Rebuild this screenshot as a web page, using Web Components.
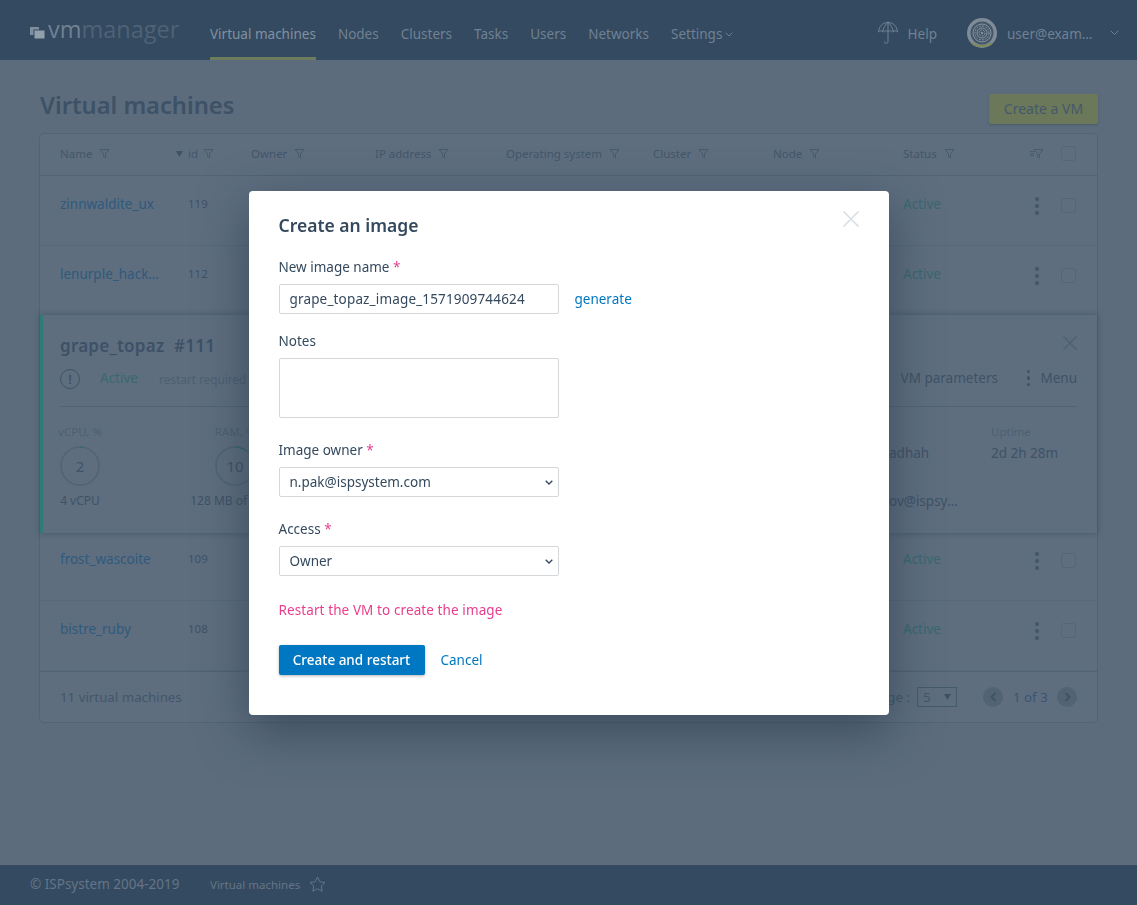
<!DOCTYPE html>
<html lang="en">
<head>
<meta charset="utf-8">
<title>Virtual machines</title>
<style>
  html, body { margin: 0; height: 100%; }
  body {
    background: #5c6c7c;
    font-family: "Noto Sans", "Open Sans", sans-serif;
    font-size: 13.5px;
    color: #3f5267;
  }
</style>
</head>
<body>
<vm-app>
  <vm-header slot="header"></vm-header>
  <vm-title-bar slot="main"></vm-title-bar>
  <vm-table slot="main">
    <vm-row name="zinnwaldite_ux" vmid="119"></vm-row>
    <vm-row name="lenurple_hack…" vmid="112"></vm-row>
    <vm-card></vm-card>
    <vm-row name="frost_wascoite" vmid="109"></vm-row>
    <vm-row name="bistre_ruby" vmid="108"></vm-row>
  </vm-table>
  <vm-footer slot="footer"></vm-footer>
</vm-app>
<vm-dialog>
  <form-field label="New image name" required>
    <div class="inline">
      <text-box value="grape_topaz_image_1571909744624"></text-box>
      <a class="link">generate</a>
    </div>
  </form-field>
  <form-field label="Notes"><text-box multiline></text-box></form-field>
  <form-field label="Image owner" required><select-box value="n.pak@ispsystem.com"></select-box></form-field>
  <form-field label="Access" required><select-box value="Owner"></select-box></form-field>
</vm-dialog>

<script>
const funnel = `<svg class="fn" width="11" height="11" viewBox="0 0 11 11" fill="none" stroke="#475a6e" stroke-width="1"><path d="M1 1.500h9L6.500 5.600v4.200L4.500 8.600v-3z"/></svg>`;

function define(name, html, init) {
  const tpl = document.createElement('template');
  tpl.innerHTML = html;
  customElements.define(name, class extends HTMLElement {
    constructor() {
      super();
      this.attachShadow({ mode: 'open' }).appendChild(tpl.content.cloneNode(true));
    }
    connectedCallback() {
      if (init) init(this, this.shadowRoot);
    }
  });
}

define('vm-app', `
  <style>
    :host { display: flex; flex-direction: column; min-height: 905px; }
    main { flex: 1; padding: 0 39px; }
  </style>
  <slot name="header"></slot>
  <main><slot name="main"></slot></main>
  <slot name="footer"></slot>
`);

define('vm-header', `
  <style>
    :host { display: flex; height: 60px; background: #344a60; color: #708193; align-items: stretch; }
    .logo { display: flex; align-items: center; width: 210px; padding-left: 30px; box-sizing: border-box; }
    .logo svg { margin-top: 6px; }
    .logo span { font-size: 23.500px; line-height: 30px; font-family: "Open Sans", sans-serif; margin: -3px 0 0 3px; color: #4f6276; }
    .logo b { font-weight: 400; color: #708193; }
    nav { display: flex; gap: 22px; }
    nav a { display: flex; align-items: center; gap: 3px; box-sizing: border-box; height: 60px; padding-top: 8px; }
    nav a.on { border-bottom: 3px solid #6c7c5c; padding-top: 11px; color: #8091a1; }
    .right { margin-left: auto; display: flex; align-items: center; padding-top: 6px; }
    .help { display: flex; align-items: center; gap: 10px; margin-right: 30px; }
    .help span { margin-top: 2px; }
    .user { margin: 2px 0 0 10px; width: 92px; white-space: nowrap; }
    .chev { margin: 0 18px 0 11px; }
  </style>
  <div class="logo">
    <svg width="15" height="13" viewBox="0 0 15 13"><rect x="0" y="0" width="9" height="8" fill="#7e8e9c"/><rect x="4" y="3" width="11" height="9" fill="#92a0ac" stroke="#344a60"/></svg>
    <span><b>vm</b>manager</span>
  </div>
  <nav>
    <a class="on">Virtual machines</a><a>Nodes</a><a>Clusters</a><a>Tasks</a><a>Users</a><a>Networks</a>
    <a>Settings <svg width="8" height="5" viewBox="0 0 8 5" fill="none" stroke="#708193"><path d="M.7.7 4 4l3.300-3.300"/></svg></a>
  </nav>
  <div class="right">
    <div class="help">
      <svg width="20" height="24" viewBox="0 0 20 24" fill="none" stroke="#708193" stroke-width="1"><path d="M.5 11C1 5 5 1.500 10 1.500S19 5 19.500 11c-1.500-1.600-3.200-1.600-4.800 0-1.500-1.600-3.200-1.600-4.700 0-1.500-1.600-3.200-1.600-4.700 0C3.700 9.400 2 9.400.5 11zM10 1.500c-3 2-4.800 5.500-5.300 9.500M10 1.500c3 2 4.800 5.500 5.300 9.500M10 .5V11M10 11v9.500a1.800 1.800 0 0 1-3.600 0"/></svg>
      <span>Help</span>
    </div>
    <svg width="30" height="30" viewBox="0 0 30 30">
      <circle cx="15" cy="15" r="15" fill="#7f8c98"/>
      <circle cx="15" cy="15" r="11.500" fill="#43566a"/>
      <circle cx="15" cy="15" r="9" fill="none" stroke="#8794a0"/>
      <circle cx="15" cy="15" r="7" fill="none" stroke="#8794a0" stroke-dasharray="2 1"/>
      <circle cx="15" cy="15" r="5" fill="none" stroke="#8794a0"/>
      <circle cx="15" cy="15" r="3" fill="none" stroke="#8794a0" stroke-dasharray="2 1"/>
      <circle cx="15" cy="15" r="1.200" fill="#8794a0"/>
      <path d="M5 25c5 4 15 4 20 0" fill="none" stroke="#7d8a5c" stroke-width="2"/>
    </svg>
    <span class="user">user@exam…</span>
    <svg class="chev" width="9" height="6" viewBox="0 0 9 6" fill="none" stroke="#708193"><path d="M.7.7 4.500 4.500 8.300.7"/></svg>
  </div>
`);

define('vm-title-bar', `
  <style>
    :host { display: flex; justify-content: space-between; align-items: center; height: 30px; margin: 34px 0 9px; }
    h1 { margin: -9px 0 0 1px; font-size: 23.700px; font-weight: 600; line-height: 30px; color: #3d5167; }
    button { width: 109px; height: 30px; padding: 0 0 2px; border: 0; border-radius: 2px; background: #6b7859; color: #44586d; font: inherit; font-size: 14px; box-shadow: 0 1px 2px rgba(40,55,70,.35); }
  </style>
  <h1>Virtual machines</h1>
  <button>Create a VM</button>
`);

define('vm-table', `
  <style>
    :host { display: block; height: 590px; box-sizing: border-box; border: 1px solid #526374; border-radius: 5px; background: #5e6e7f; }
    .head, .foot { display: grid; align-items: center; padding-left: 20px; font-size: 11.500px; color: #43566b; }
    .head { grid-template-columns: 116px 75px 124px 131px 147px 120px 130px 127px 31px 14px; box-sizing: border-box; height: 42px; padding-bottom: 2px; border-bottom: 1px solid #526374; }
    .head span { display: flex; align-items: center; gap: 7px; }
    .id { gap: 5px !important; }
    .box { width: 13px; height: 13px; border: 1px solid #566676; border-radius: 3px; }
    .foot { display: flex; box-sizing: border-box; height: 52px; padding: 0 20px 2px 20px; border-top: 1px solid #526374; font-size: 13.300px; }
    .pager { margin-left: auto; display: flex; align-items: center; }
    .size { box-sizing: border-box; width: 40px; height: 20px; margin: 0 26px 0 7px; padding: 0 5px; border: 1px solid #445a6e; display: flex; align-items: center; justify-content: space-between; }
    .nav { width: 20px; height: 20px; border-radius: 50%; background: #526374; display: flex; align-items: center; justify-content: center; }
    .of { margin: 0 10px; width: 34px; white-space: nowrap; color: #3a5470; }
  </style>
  <div class="head">
    <span>Name ${funnel}</span>
    <span class="id"><svg width="7" height="6" viewBox="0 0 7 6"><path d="M0 0h7L3.500 6z" fill="#3f5267"/></svg>id ${funnel}</span>
    <span>Owner ${funnel}</span>
    <span>IP address ${funnel}</span>
    <span>Operating system ${funnel}</span>
    <span>Cluster ${funnel}</span>
    <span>Node ${funnel}</span>
    <span>Status ${funnel}</span>
    <span><svg width="14" height="11" viewBox="0 0 14 11" fill="none" stroke="#475a6e"><path d="M0 3.500h4M0 5.500h4M0 7.500h4M4 1.500h9L9.500 5.600v4.200L7.500 8.600v-3z"/></svg></span>
    <div class="box"></div>
  </div>
  <slot></slot>
  <div class="foot">
    <span>11 virtual machines</span>
    <div class="pager">
      <span>Items per page :</span>
      <div class="size"><span>5</span><svg width="7" height="6" viewBox="0 0 7 6"><path d="M0 0h7L3.500 6z" fill="#3f5267"/></svg></div>
      <div class="nav"><svg width="7" height="10" viewBox="0 0 7 10" fill="none" stroke="#3f5267" stroke-width="2"><path d="M5.500 1 1.500 5l4 4"/></svg></div>
      <span class="of">1 of 3</span>
      <div class="nav"><svg width="7" height="10" viewBox="0 0 7 10" fill="none" stroke="#3f5267" stroke-width="2"><path d="M1.500 1l4 4-4 4"/></svg></div>
    </div>
  </div>
`);

define('vm-row', `
  <style>
    :host { display: grid; grid-template-columns: 128px 842px 31px 14px; align-items: start; height: 70px; box-sizing: border-box; padding: 18px 0 0 20px; border-bottom: 1px solid #576879; }
    .name { color: #2f5a7c; line-height: 20px; font-size: 13.500px; white-space: nowrap; }
    .mid { display: flex; line-height: 20px; }
    .id { color: #3f5266; font-size: 11.500px; }
    .st { color: #38696f; margin-left: auto; width: 127px; font-size: 13.500px; }
    .dots { display: flex; flex-direction: column; gap: 3.500px; margin: 3px 0 0 5px; }
    .dots i { width: 3.500px; height: 3.500px; border-radius: 50%; background: #455768; }
    .box { width: 13px; height: 13px; border: 1px solid #566676; border-radius: 3px; margin-top: 4px; }
  </style>
  <div class="name"></div>
  <div class="mid"><span class="id"></span><span class="st">Active</span></div>
  <div class="dots"><i></i><i></i><i></i></div>
  <div class="box"></div>
`, (el, root) => {
  root.querySelector('.name').textContent = el.getAttribute('name');
  root.querySelector('.id').textContent = el.getAttribute('vmid');
});

define('vm-metric', `
  <style>
    :host { display: flex; flex-direction: column; align-items: center; width: 40px; white-space: nowrap; }
    .lb { font-size: 11.500px; color: #4d6073; line-height: 16px; }
    .dial { position: relative; width: 40px; height: 40px; margin: 6px 0 6px; }
    .dial span { position: absolute; inset: 0; display: flex; align-items: center; justify-content: center; font-size: 15px; color: #3f5267; }
    .sub { font-size: 12px; color: #3f5267; line-height: 18px; }
  </style>
  <div class="lb"></div>
  <div class="dial">
    <svg width="40" height="40" viewBox="0 0 40 40" fill="none" stroke-width="1.500"><circle cx="20" cy="20" r="19" stroke="#526374"/><path class="arc" stroke="#38696f"/></svg>
    <span class="v"></span>
  </div>
  <div class="sub"></div>
`, (el, root) => {
  root.querySelector('.lb').textContent = el.getAttribute('label');
  root.querySelector('.v').textContent = el.getAttribute('value');
  root.querySelector('.sub').textContent = el.getAttribute('sub');
  const a = el.getAttribute('value') * 3.6 * Math.PI / 180;
  root.querySelector('.arc').setAttribute('d', `M20 1A19 19 0 0 1 ${20 + 19 * Math.sin(a)} ${20 - 19 * Math.cos(a)}`);
});

define('vm-card', `
  <style>
    :host { display: block; height: 218px; box-sizing: border-box; margin: -1px 0 -2px; padding: 19px 20px 0 17px; border-left: 3px solid #2f7a7a; position: relative; background: #5e6e7f; box-shadow: 0 0 6px rgba(40,55,70,.45); }
    .t { font-size: 17px; font-weight: 600; line-height: 24px; color: #3d5167; word-spacing: 5px; letter-spacing: .25px; }
    .close { position: absolute; top: 21px; right: 20px; }
    .st { display: flex; align-items: center; height: 30px; margin-top: 6px; }
    .alert { box-sizing: border-box; width: 20px; height: 20px; border: 1.500px solid #3f5267; border-radius: 50%; display: flex; align-items: center; justify-content: center; font-size: 13px; font-weight: 600; line-height: 1; margin-right: 20px; }
    .active { color: #38696f; margin: -2px 21px 0 0; }
    .req { font-size: 11.800px; color: #4d6073; margin-top: -1px; }
    .tools { margin: -2px 0 0 auto; display: flex; align-items: center; color: #3f5267; }
    .dots { display: flex; flex-direction: column; gap: 3px; margin: 0 10px 0 29px; }
    .dots i { width: 3.500px; height: 3.500px; border-radius: 50%; background: #3f5267; }
    hr { border: 0; border-top: 1px solid #526374; margin: 12px 0 17px; }
    .m { display: flex; }
    vm-metric + vm-metric { margin-left: 115px; }
    .col { font-size: 13.500px; line-height: 18px; color: #3f5267; white-space: nowrap; }
    .col small { display: block; font-size: 11.500px; line-height: 16px; color: #4d6073; margin-bottom: 4px; }
    .own { margin-left: auto; width: 102px; }
    .own p { margin: 30px 0 0; }
    .up { width: 86px; }
  </style>
  <div class="t">grape_topaz #111</div>
  <svg class="close" width="14" height="14" viewBox="0 0 14 14" stroke="#4d6073" stroke-width="1.300"><path d="M.5.500l13 13M13.500.5l-13 13"/></svg>
  <div class="st">
    <span class="alert">!</span>
    <span class="active">Active</span>
    <span class="req">restart required</span>
    <div class="tools">
      <span>VM parameters</span>
      <span class="dots"><i></i><i></i><i></i></span>
      <span>Menu</span>
    </div>
  </div>
  <hr>
  <div class="m">
    <vm-metric label="vCPU, %" value="2" sub="4 vCPU"></vm-metric>
    <vm-metric label="RAM, %" value="10" sub="128 MB of 1 GiB"></vm-metric>
    <div class="col own"><small>&nbsp;</small>adhah<p>ov@ispsy…</p></div>
    <div class="col up"><small>Uptime</small>2d 2h 28m</div>
  </div>
`);

define('vm-footer', `
  <style>
    :host { display: flex; align-items: center; box-sizing: border-box; height: 40px; padding: 0 0 2px 30px; background: #344a60; color: #647587; }
    .c { width: 180px; }
    .p { font-size: 11.500px; margin-right: 9px; }
  </style>
  <span class="c">© ISPsystem 2004-2019</span>
  <span class="p">Virtual machines</span>
  <svg width="17" height="16" viewBox="0 0 17 16" fill="none" stroke="#647587"><path d="M8.500 1l2.300 4.800 5.200.7-3.800 3.600 1 5.200-4.700-2.600-4.700 2.600 1-5.200L1 6.500l5.200-.7z"/></svg>
`);

define('vm-dialog', `
  <style>
    :host { position: fixed; inset: 0; display: flex; align-items: center; justify-content: center; color: #34495e; font-size: 13.500px; }
    .box { position: relative; box-sizing: border-box; width: 640px; height: 524px; padding: 23px 30px 0; background: #fff; border-radius: 4px; box-shadow: 0 15px 50px rgba(35,52,70,.6); }
    h2 { margin: 0 0 21px; font-size: 17.500px; font-weight: 600; line-height: 22px; }
    .close { position: absolute; top: 20px; right: 30px; }
    ::slotted(form-field) { margin-bottom: 22px; }
    ::slotted(form-field:first-child) { margin-bottom: 17px; }
    .msg { margin: 24px 0 0; line-height: 20px; color: #e83e8c; letter-spacing: .1px; }
    .act { display: flex; align-items: center; margin-top: 25px; }
    button { width: 146px; height: 30px; border: 0; border-radius: 2px; background: #0077c2; color: #fff; font: inherit; font-weight: 500; box-shadow: 0 1px 3px rgba(0,0,0,.3); }
    a { margin-left: 16px; color: #0077c2; }
  </style>
  <div class="box">
    <h2>Create an image</h2>
    <svg class="close" width="16" height="16" viewBox="0 0 16 16" stroke="#d8dde2" stroke-width="1.500"><path d="M.5.500l15 15M15.500.5l-15 15"/></svg>
    <slot></slot>
    <p class="msg">Restart the VM to create the image</p>
    <div class="act"><button>Create and restart</button><a>Cancel</a></div>
  </div>
`);

define('form-field', `
  <style>
    :host { display: block; }
    label { display: block; line-height: 20px; margin-bottom: 7px; }
    b { font-weight: 400; color: #e83e8c; }
    ::slotted(.inline) { display: flex; align-items: center; gap: 16px; color: #0077c2; }
  </style>
  <label><span></span><b></b></label>
  <slot></slot>
`, (el, root) => {
  root.querySelector('span').textContent = el.getAttribute('label');
  if (el.hasAttribute('required')) root.querySelector('b').textContent = ' *';
});

define('text-box', `
  <style>
    :host { display: block; width: 280px; }
    input, textarea { display: block; box-sizing: border-box; width: 280px; height: 30px; padding: 0 10px; margin: 0; border: 1px solid #d5d8db; border-radius: 2px; font: inherit; letter-spacing: .16px; color: #34495e; resize: none; outline: 0; }
    textarea { height: 60px; }
  </style>
`, (el, root) => {
  const f = document.createElement(el.hasAttribute('multiline') ? 'textarea' : 'input');
  if (el.hasAttribute('value')) f.value = el.getAttribute('value');
  root.appendChild(f);
});

define('select-box', `
  <style>
    :host { display: block; width: 280px; position: relative; }
    select { display: block; box-sizing: border-box; width: 280px; height: 30px; padding: 0 10px; border: 1px solid #d5d8db; border-radius: 2px; background: #fff; font: inherit; color: #34495e; outline: 0; appearance: none; -webkit-appearance: none; }
    svg { position: absolute; top: 13px; right: 6px; pointer-events: none; }
  </style>
  <select><option></option></select>
  <svg width="8" height="5" viewBox="0 0 8 5" fill="none" stroke="#34495e" stroke-width="1.300"><path d="M.7.7 4 4l3.300-3.300"/></svg>
`, (el, root) => {
  root.querySelector('option').textContent = el.getAttribute('value');
});
</script>
</body>
</html>
